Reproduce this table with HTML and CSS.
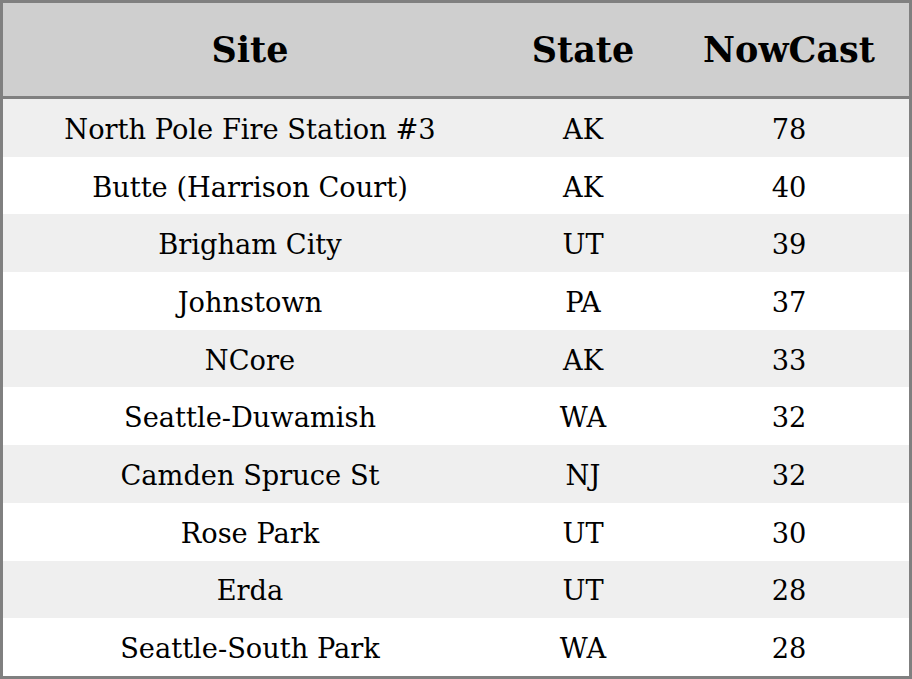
FILE: index.html
```html
<!DOCTYPE html>
<html>
<head>
<meta charset="utf-8">
<link rel="stylesheet" href="styles.css">
</head>
<body>
<table class="aq">
  <colgroup>
    <col class="c-site">
    <col class="c-state">
    <col class="c-now">
  </colgroup>
  <thead>
    <tr><th>Site</th><th>State</th><th>NowCast</th></tr>
  </thead>
  <tbody>
    <tr><td>North Pole Fire Station #3</td><td>AK</td><td>78</td></tr>
    <tr><td>Butte (Harrison Court)</td><td>AK</td><td>40</td></tr>
    <tr><td>Brigham City</td><td>UT</td><td>39</td></tr>
    <tr><td>Johnstown</td><td>PA</td><td>37</td></tr>
    <tr><td>NCore</td><td>AK</td><td>33</td></tr>
    <tr><td>Seattle-Duwamish</td><td>WA</td><td>32</td></tr>
    <tr><td>Camden Spruce St</td><td>NJ</td><td>32</td></tr>
    <tr><td>Rose Park</td><td>UT</td><td>30</td></tr>
    <tr><td>Erda</td><td>UT</td><td>28</td></tr>
    <tr><td>Seattle-South Park</td><td>WA</td><td>28</td></tr>
  </tbody>
</table>
</body>
</html>
```
FILE: styles.css
```css
html, body {
  margin: 0;
  padding: 0;
  background: #ffffff;
}
.aq {
  width: 912px;
  height: 679px;
  border-collapse: separate;
  border-spacing: 0;
  border: 3px solid #808080;
  box-sizing: border-box;
  table-layout: fixed;
  font-family: "DejaVu Serif", serif;
  color: #000;
}
.c-site { width: 494px; }
.c-state { width: 172px; }
.c-now { width: 240px; }
.aq th {
  background: #cfcfcf;
  font-size: 35px;
  font-weight: bold;
  height: 93px;
  padding: 0;
  border-bottom: 3px solid #808080;
  text-align: center;
  vertical-align: middle;
}
.aq td {
  font-size: 27.25px;
  height: 54.7px;
  padding: 3px 0 0 0;
  text-align: center;
  vertical-align: middle;
}
.aq tbody tr:nth-child(odd) td {
  background: #efefef;
}
```
